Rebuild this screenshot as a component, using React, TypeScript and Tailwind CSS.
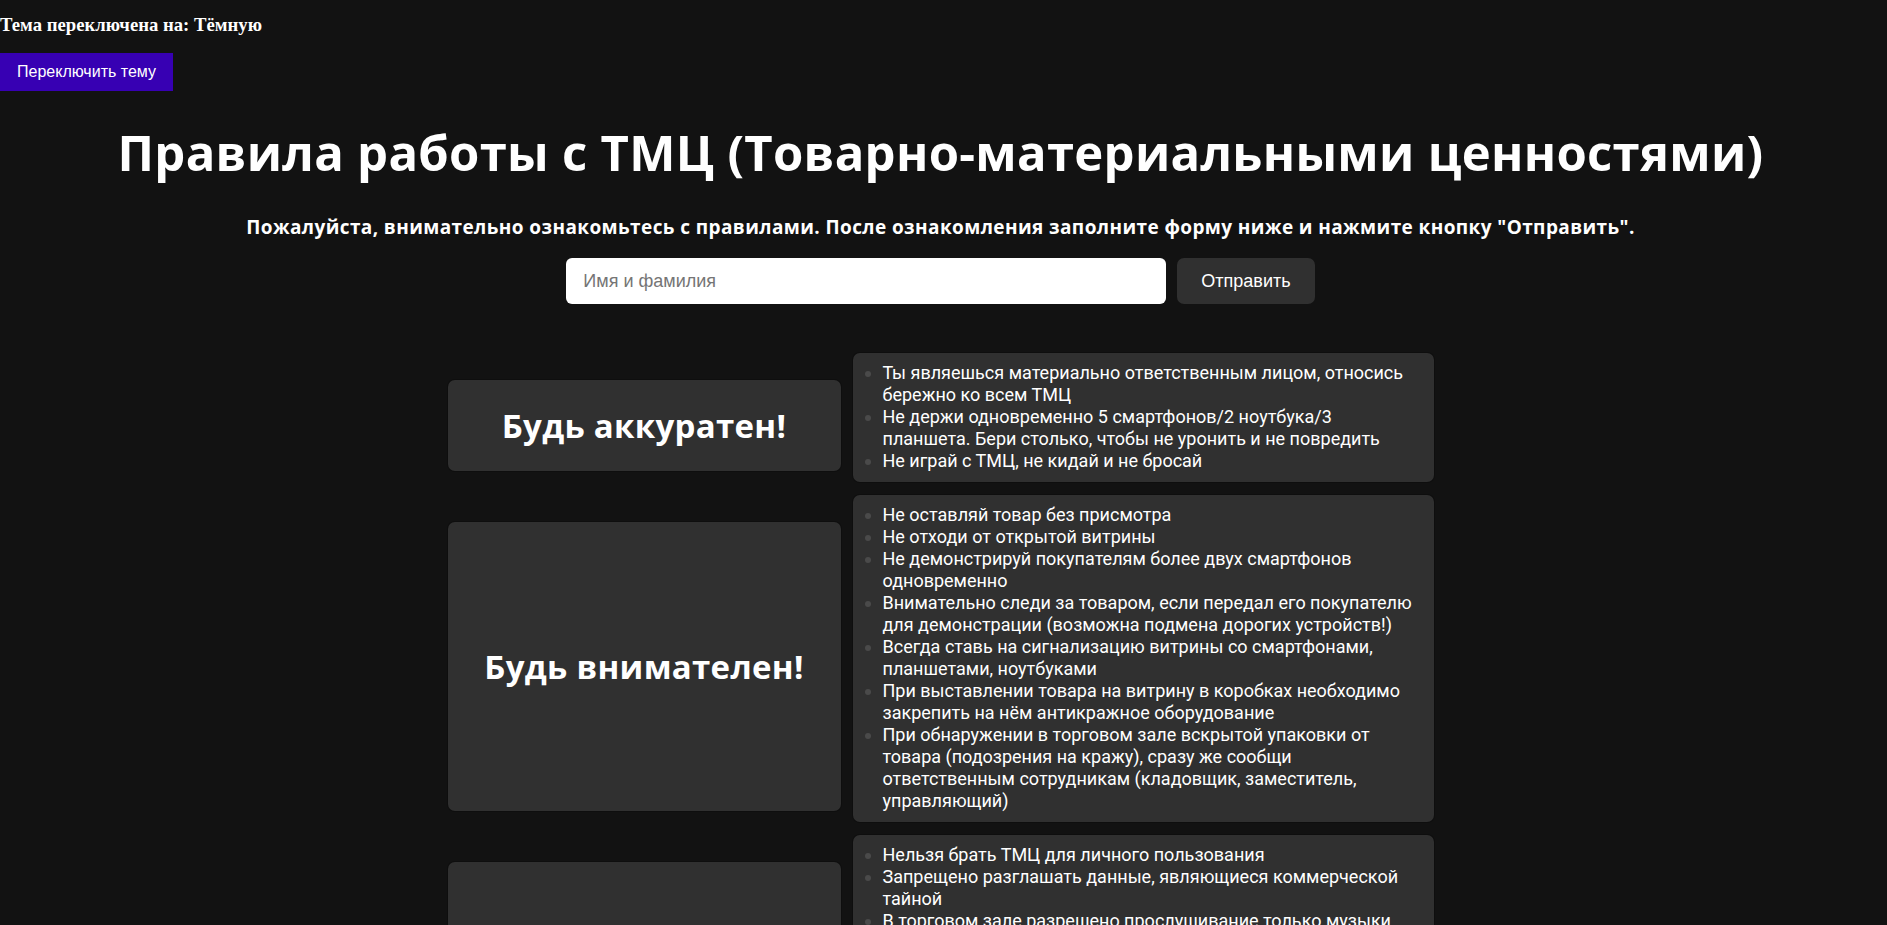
import React from 'react';

// Правила работы с ТМЦ — тёмная тема.

const RULES = [
  {
    title: 'Будь аккуратен!',
    items: [
      'Ты являешься материально ответственным лицом, относись бережно ко всем ТМЦ',
      'Не держи одновременно 5 смартфонов/2 ноутбука/3 планшета. Бери столько, чтобы не уронить и не повредить',
      'Не играй с ТМЦ, не кидай и не бросай',
    ],
  },
  {
    title: 'Будь внимателен!',
    items: [
      'Не оставляй товар без присмотра',
      'Не отходи от открытой витрины',
      'Не демонстрируй покупателям более двух смартфонов одновременно',
      'Внимательно следи за товаром, если передал его покупателю для демонстрации (возможна подмена дорогих устройств!)',
      'Всегда ставь на сигнализацию витрины со смартфонами, планшетами, ноутбуками',
      'При выставлении товара на витрину в коробках необходимо закрепить на нём антикражное оборудование',
      'При обнаружении в торговом зале вскрытой упаковки от товара (подозрения на кражу), сразу же сообщи ответственным сотрудникам (кладовщик, заместитель, управляющий)',
    ],
  },
  {
    title: 'Будь честен!',
    items: [
      'Нельзя брать ТМЦ для личного пользования',
      'Запрещено разглашать данные, являющиеся коммерческой тайной',
      'В торговом зале разрешено прослушивание только музыки, согласованной с управляющим',
      'Запрещено выносить демонстрационные образцы за пределы торгового зала',
      'Не передавай ключи от витрин и склада посторонним лицам',
      'Все операции с ТМЦ оформляй только через учётную систему',
    ],
  },
];

const heading = "font-[family-name:'Open_Sans',sans-serif]";
const body = "font-[family-name:'Roboto',sans-serif]";

export default function App() {
  return (
    <div className="min-h-screen bg-[#121212] text-white pb-10">
      <div className="pt-[14px] font-[family-name:'Liberation_Serif',serif] font-bold text-[18.72px] leading-[21px]">
        Тема переключена на: Тёмную
      </div>
      <button className="mt-[18px] h-[38px] px-[17px] bg-[#3700b3] text-white text-[16px] font-[family-name:'Liberation_Sans',Arial,sans-serif]">
        Переключить тему
      </button>

      <div className="pr-[6px]">
        <h1 className={`${heading} mt-[32px] text-center font-bold text-[49px] leading-[58px] tracking-[0.3px]`}>
          Правила работы с ТМЦ (Товарно-материальными ценностями)
        </h1>
        <p className={`${heading} mt-[35px] text-center font-bold text-[19px] leading-[22px] tracking-[0.4px]`}>
          Пожалуйста, внимательно ознакомьтесь с правилами. После ознакомления заполните форму ниже и нажмите кнопку "Отправить".
        </p>

        <form className="mt-[20px] flex justify-center gap-[11px] font-[family-name:'Liberation_Sans',Arial,sans-serif]">
          <input
            type="text"
            placeholder="Имя и фамилия"
            className="w-[600px] h-[46px] rounded-[6px] bg-white pl-[17px] text-[18px] text-black placeholder:text-[#757575] outline-none"
          />
          <button type="button" className="h-[46px] px-[24px] rounded-[7px] bg-[#303030] text-white text-[18px]">
            Отправить
          </button>
        </form>

        <div className="mt-[48px] w-[988px] mx-auto">
          {RULES.map(r => (
            <div key={r.title} className="flex items-stretch gap-[10px] mb-[11px]">
              <div className="w-[395px] shrink-0 mt-[27px] mb-[11px] flex items-center justify-center rounded-[8px] border border-black/70 bg-[#303030]">
                <h2 className={`${heading} font-bold text-[33px] tracking-[0.3px]`}>{r.title}</h2>
              </div>
              <ul className={`${body} w-[583px] shrink-0 list-disc marker:text-[#4a4a4a] rounded-[8px] border border-black/70 bg-[#303030] pt-[9px] pb-[10px] pl-[30px] pr-[12px] text-[18px] leading-[22px]`}>
                {r.items.map(i => (
                  <li key={i}>{i}</li>
                ))}
              </ul>
            </div>
          ))}
        </div>
      </div>
    </div>
  );
}
